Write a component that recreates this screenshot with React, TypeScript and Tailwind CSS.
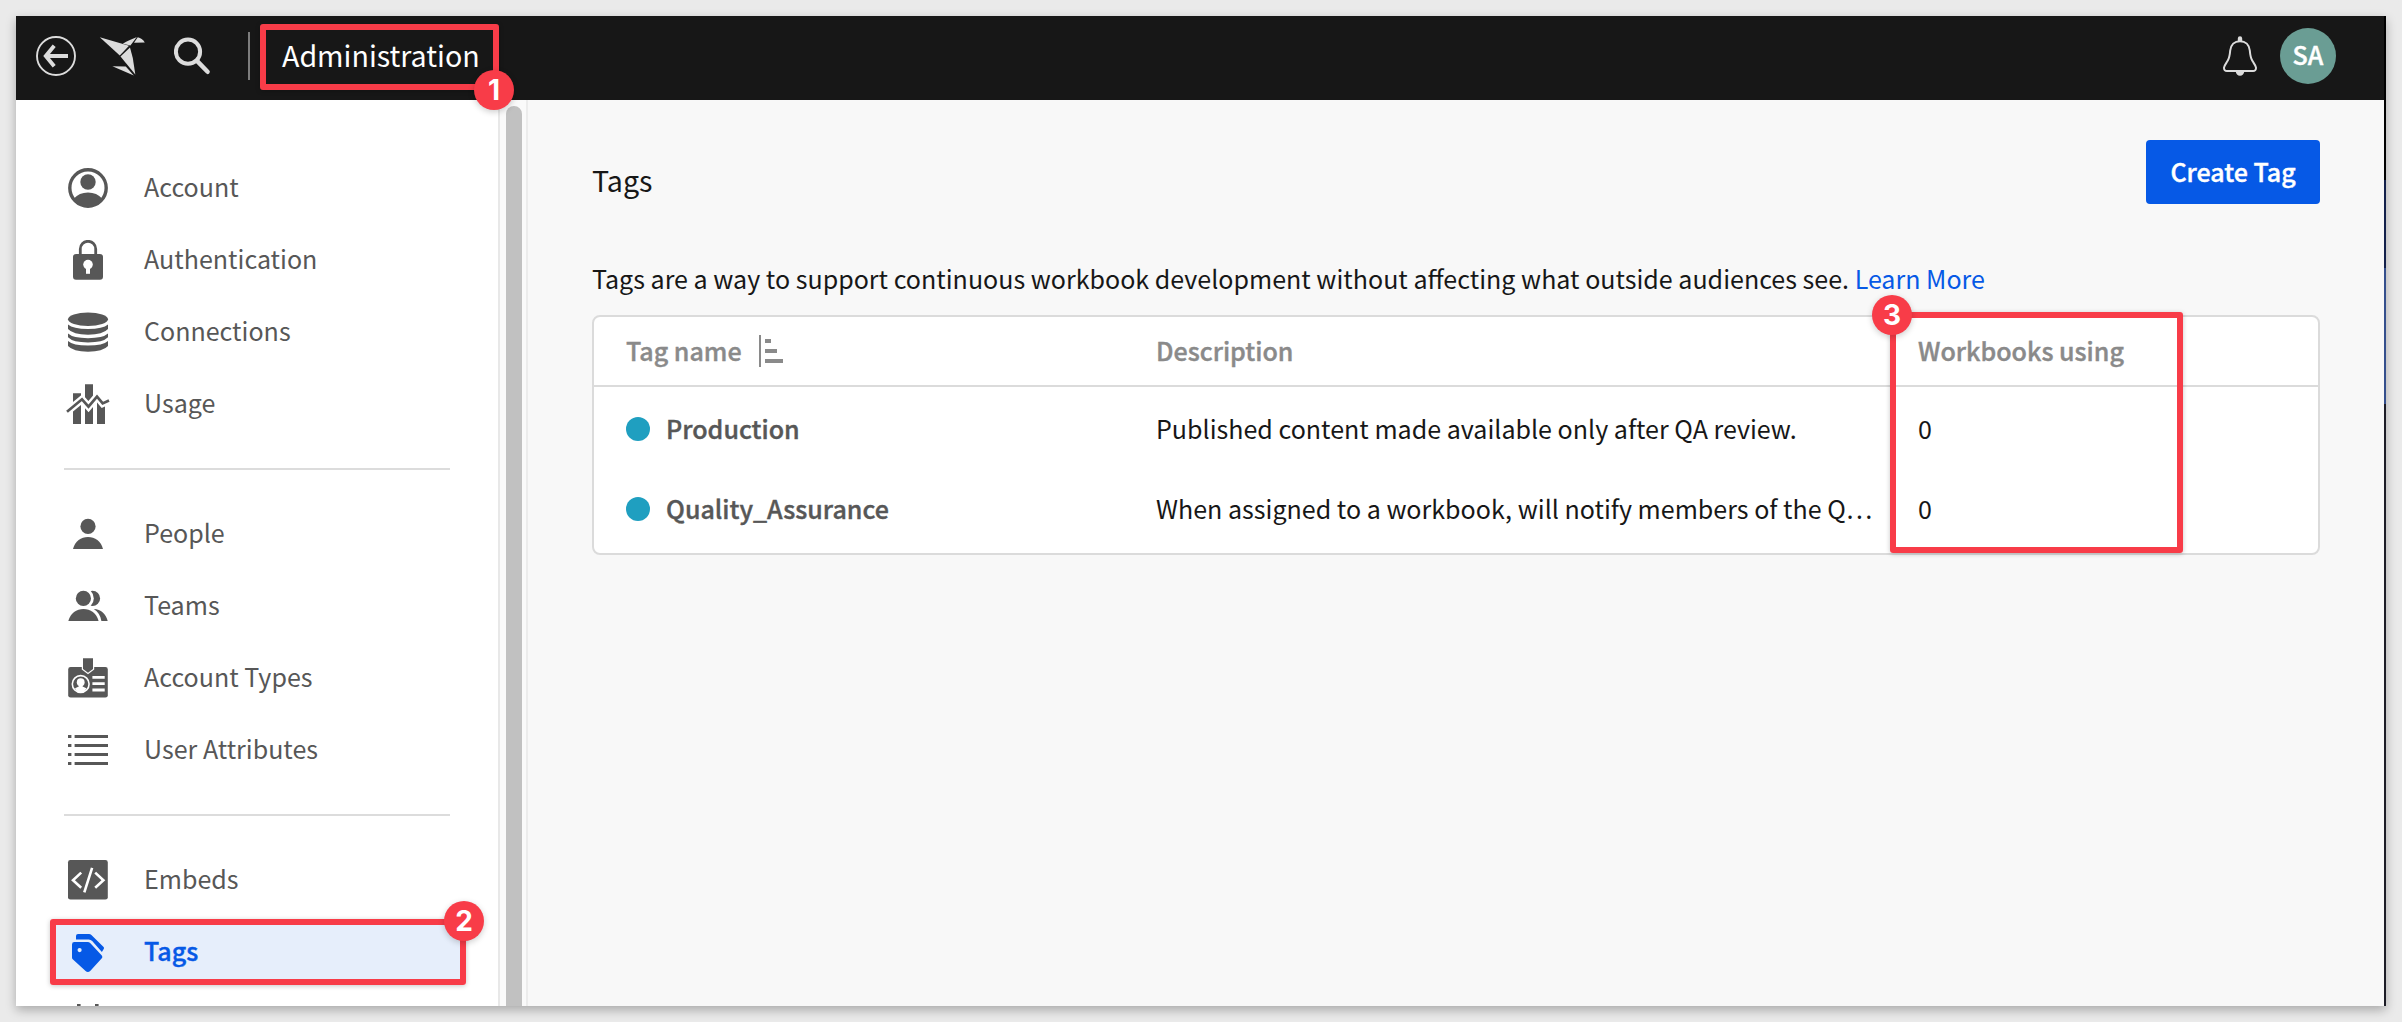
import type { ReactNode } from "react";

/* ---------- sidebar icons, drawn on a 44x40 canvas centred on the origin ---------- */

function Glyph({ children }: { children: ReactNode }) {
  return (
    <svg viewBox="-22 -20 44 40" className="h-10 w-11 shrink-0" fill="currentColor">
      {children}
    </svg>
  );
}

const AccountIcon = () => (
  <Glyph>
    <clipPath id="account-clip">
      <circle r="19" />
    </clipPath>
    <circle r="18.2" fill="none" stroke="currentColor" strokeWidth="3.4" />
    <circle cy="-6" r="7.7" />
    <path clipPath="url(#account-clip)" d="M-14 10.5Q-9 4.4 0 4.4Q9 4.4 14 10.5V20H-14Z" />
  </Glyph>
);

const LockIcon = () => (
  <Glyph>
    <path d="M-7.7 -4V-11A7.7 7.7 0 0 1 7.7 -11V-4" fill="none" stroke="currentColor" strokeWidth="2.8" />
    <rect x="-15" y="-6" width="30" height="25.8" rx="3" />
    <circle cy="4.6" r="4.8" fill="#fff" />
    <rect x="-2" y="6" width="4" height="7.8" fill="#fff" />
  </Glyph>
);

const DatabaseIcon = () => (
  <Glyph>
    <ellipse cy="-12.8" rx="20" ry="6.8" />
    <path d="M-20 -7.4Q-15 -3 0 -3Q15 -3 20 -7.4V-3Q15 2.7 0 2.7Q-15 2.7 -20 -3Z" />
    <path d="M-20 1.6Q-15 6.2 0 6.2Q15 6.2 20 1.6V5.2Q15 10.4 0 10.4Q-15 10.4 -20 5.2Z" />
    <path d="M-20 9Q-15 13.6 0 13.6Q15 13.6 20 9V14Q15 19.7 0 19.7Q-15 19.7 -20 14Z" />
  </Glyph>
);

const UsageIcon = () => (
  <Glyph>
    <path d="M-15 -10.7H-7V20H-15ZM-3 -19.7H5V20H-3ZM9 -4H17V20H9Z" />
    <path d="M-21 7.7L-6 -4.7L.5 2.6L9 -7.4L14.7 -.6L21 -3.4" fill="none" stroke="#fff" strokeWidth="7.4" />
    <path d="M-21 7.7L-6 -4.7L.5 2.6L9 -7.4L14.7 -.6L21 -3.4" fill="none" stroke="currentColor" strokeWidth="2.7" />
  </Glyph>
);

const PersonIcon = () => (
  <Glyph>
    <circle cy="-7.6" r="7.6" />
    <path d="M-15 15C-13 7 -7 3 0 3S13 7 15 15Z" />
  </Glyph>
);

const TeamsIcon = () => (
  <Glyph>
    <circle cx="4.5" cy="-7.6" r="7.6" />
    <circle cx="-4.6" cy="-7.6" r="10.4" fill="#fff" />
    <circle cx="-4.6" cy="-7.6" r="7.6" />
    <path d="M-19.7 15C-17.5 7 -11.5 3 -4.5 3S8.5 7 10.6 15Z" />
    <path d="M5.8 3C13 3 18 8 19.7 15H13.4C12.6 9.5 10 5.8 5.8 3Z" />
  </Glyph>
);

const BadgeIcon = () => (
  <Glyph>
    <rect x="-19.8" y="-11" width="39.6" height="30.6" rx="2.4" />
    <path d="M-6.2 -20H6.2V-8.4L0 -3.8L-6.2 -8.4Z" fill="#fff" />
    <path d="M-5 -19.8H5V-9L0 -5.2L-5 -9Z" />
    <circle cx="-7.3" cy="6" r="8.4" fill="none" stroke="#fff" strokeWidth="1.6" />
    <circle cx="-7.3" cy="4.2" r="3.9" fill="#fff" />
    <path d="M-9.2 6H-5.4V8.4L-1.6 10.2Q-3.4 14.4 -7.3 14.4T-13 10.2L-9.2 8.4Z" fill="#fff" />
    <path d="M4.4 -2H16.7V.8H4.4ZM4.4 4.2H16.7V7H4.4ZM4.4 10.6H16.7V13.4H4.4Z" fill="#fff" />
  </Glyph>
);

const ListIcon = () => (
  <Glyph>
    <path d="M-20 -15H-16.6V-12H-20ZM-20 -6H-16.6V-3H-20ZM-20 3H-16.6V6H-20ZM-20 12H-16.6V15H-20Z" />
    <path d="M-13.4 -15H20V-12H-13.4ZM-13.4 -6H20V-3H-13.4ZM-13.4 3H20V6H-13.4ZM-13.4 12H20V15H-13.4Z" />
  </Glyph>
);

const EmbedIcon = () => (
  <Glyph>
    <rect x="-20" y="-20" width="39.8" height="39.6" rx="2.4" />
    <path
      d="M-6.8 -7.4L-15 .2L-6.8 7.8M7.2 -7.4L15.4 .2L7.2 7.8M4.1 -12.2L-3.7 12.4"
      fill="none"
      stroke="#fff"
      strokeWidth="2.6"
    />
  </Glyph>
);

const TagIcon = () => (
  <Glyph>
    <path d="M-12 -12.6V-16Q-12 -18 -10 -18H1Q2.4 -18 3.4 -17L15.6 -5Q16.4 -4 15.7 -3L13.9 0L4.2 -11Q2.8 -12.6 .8 -12.6Z" />
    <path
      fillRule="evenodd"
      d="M-13.6 -10H-.5Q1.2 -10 2.4 -8.8L13.8 3.6Q14.8 4.9 13.8 6.2L2.2 18.9Q-.2 21 -2.4 18.9L-15 7.6Q-16 6.6 -16 5.4V-7.6Q-16 -10 -13.6 -10ZM-8.4 -4A2.1 2.1 0 1 0 -8.4 .2A2.1 2.1 0 1 0 -8.4 -4Z"
    />
  </Glyph>
);

const NextIcon = () => (
  <Glyph>
    <path d="M-11 -20H-7.4V-8H-11ZM7 -20H10.6V-8H7Z" />
  </Glyph>
);

/* ---------- annotations ---------- */

function Marker({ n, className }: { n: number; className: string }) {
  return (
    <span
      className={`absolute z-20 flex size-10 items-center justify-center rounded-full bg-[#f83c48] font-[Inter] text-[28px] leading-none font-bold text-white shadow-[0_2px_6px_rgba(0,0,0,0.2)] ${className}`}
    >
      {n}
    </span>
  );
}

function Frame({ className }: { className: string }) {
  return (
    <span
      className={`pointer-events-none absolute z-10 rounded-[3px] border-[6px] border-[#f83c48] shadow-[0_1px_5px_rgba(0,0,0,0.22)] ${className}`}
    />
  );
}

/* ---------- header ---------- */

function Header() {
  return (
    <header className="flex h-[84px] shrink-0 items-center bg-[#171717] pb-1 text-[#dcdcdc]">
      <svg viewBox="36 36 40 40" className="ml-5 size-10" fill="none" stroke="currentColor">
        <circle cx="56" cy="56" r="19" strokeWidth="1.9" />
        <path d="M68 56H46M54.2 45.8L45.8 56L54.2 66.2" strokeWidth="3.9" />
      </svg>
      <svg viewBox="98 35 48 42" className="ml-[22px] h-[42px] w-12" fill="currentColor">
        <path d="M99.8 37.2L129 45.7L119.8 55.4Z" />
        <path d="M130 47.6L120.5 56.6L135.3 74.4L132.8 58Z" />
        <path d="M112.4 66.2L125.8 66.6L133.8 75.4Z" />
        <path d="M122.8 43.8C127.5 40.5 131 39.6 136.8 37L130.4 45.6Z" />
        <path d="M137.8 37.2C140.5 37.8 143.2 39.6 144.8 42.6L134 42.8Z" />
      </svg>
      <svg viewBox="174 37 38 38" className="ml-7 size-[38px]" fill="none" stroke="currentColor">
        <circle cx="188" cy="51.7" r="12.1" strokeWidth="4" />
        <path d="M197.5 61.4L207.6 71.8" strokeWidth="4.4" strokeLinecap="round" />
      </svg>
      <div className="ml-9 h-12 w-0.5 bg-[#7d7d7d]" />
      <div className="relative ml-8 pb-0.5 text-[28.6px] leading-[42px] text-white">
        Administration
        <Frame className="-top-[10px] -left-[22px] h-[66px] w-[239px]" />
        <Marker n={1} className="top-[36px] left-[192px]" />
      </div>
      <svg viewBox="2222 35 36 42" className="ml-auto h-[42px] w-9" fill="none" stroke="currentColor">
        <path
          d="M2240 41.2C2234.4 41.2 2230.8 45 2230.2 50.5C2229.9 54 2229.6 57.4 2227.8 60.6C2226.2 63.4 2224.2 65.6 2224 67.6C2223.8 69.8 2225 71 2227 71H2253C2255 71 2256.2 69.8 2256 67.6C2255.8 65.6 2253.8 63.4 2252.2 60.6C2250.4 57.4 2250.1 54 2249.8 50.5C2249.2 45 2245.6 41.2 2240 41.2Z"
          strokeWidth="2"
        />
        <path
          d="M2237.8 41V38.4A2.2 2.2 0 0 1 2242.2 38.4V41ZM2235.8 71.6H2244.2A4.2 4.2 0 0 1 2235.8 71.6Z"
          fill="currentColor"
          stroke="none"
        />
      </svg>
      <div className="mr-12 ml-[22px] flex size-14 items-center justify-center rounded-full bg-[#6a9d94] pb-1 text-[25px] leading-9 font-medium text-white [-webkit-text-stroke:0.4px]">
        SA
      </div>
    </header>
  );
}

/* ---------- sidebar ---------- */

type Item = { label: string; icon: ReactNode; active?: boolean };

const groups: Item[][] = [
  [
    { label: "Account", icon: <AccountIcon /> },
    { label: "Authentication", icon: <LockIcon /> },
    { label: "Connections", icon: <DatabaseIcon /> },
    { label: "Usage", icon: <UsageIcon /> },
  ],
  [
    { label: "People", icon: <PersonIcon /> },
    { label: "Teams", icon: <TeamsIcon /> },
    { label: "Account Types", icon: <BadgeIcon /> },
    { label: "User Attributes", icon: <ListIcon /> },
  ],
  [
    { label: "Embeds", icon: <EmbedIcon /> },
    { label: "Tags", icon: <TagIcon />, active: true },
    { label: "", icon: <NextIcon /> },
  ],
];

function SidebarItem({ label, icon, active }: Item) {
  return (
    <li className={active ? "relative flex h-[72px] items-center text-[#0659e6]" : "flex h-[72px] items-center text-[#575757]"}>
      <div className={active ? "ml-10 flex h-16 w-[408px] items-center bg-[#e6eefb] pl-[10px]" : "flex items-center pl-[50px]"}>
        {icon}
        <span
          className={
            active
              ? "ml-[34px] pb-1 text-[25px] leading-9 font-medium [-webkit-text-stroke:0.4px]"
              : "ml-[34px] pb-1 text-[25.05px] leading-9"
          }
        >
          {label}
        </span>
      </div>
      {active && (
        <>
          <Frame className="top-[3px] left-[34px] h-[66px] w-[416px]" />
          <Marker n={2} className="-top-[15px] left-[428px]" />
        </>
      )}
    </li>
  );
}

function Sidebar() {
  return (
    <nav className="flex w-[484px] shrink-0 flex-col border-r-2 border-[#e8e8e8] bg-white pt-[52px]">
      {groups.map((items, i) => (
        <div key={i}>
          {i > 0 && <div className="mt-7 mb-7 ml-12 h-0.5 w-[386px] bg-[#dcdcdc]" />}
          <ul>
            {items.map((item, j) => (
              <SidebarItem key={j} {...item} />
            ))}
          </ul>
        </div>
      ))}
    </nav>
  );
}

/* ---------- content ---------- */

const rows = [
  { name: "Production", description: "Published content made available only after QA review.", count: 0 },
  { name: "Quality_Assurance", description: "When assigned to a workbook, will notify members of the Q…", count: 0 },
];

function TagsTable() {
  return (
    <div className="relative mt-[17px] h-[240px] w-[1728px] rounded-lg border-2 border-[#dbdbdb] bg-white">
      <div className="mb-0.5 grid h-[70px] grid-cols-[530px_762px_1fr] items-center border-b-2 border-[#dbdbdb] pl-8 text-[25.05px] leading-9 font-medium text-[#8a8a8a] [-webkit-text-stroke:0.4px]">
        <div className="flex items-center">
          <span className="pb-0.5">Tag name</span>
          <svg viewBox="0 0 24 32" className="ml-[17px] h-8 w-6" fill="currentColor">
            <path d="M0 0H2V32H0ZM6 4H12V8H6ZM6 14H18V18H6ZM6 24H24V28H6Z" />
          </svg>
        </div>
        <div className="pb-0.5">Description</div>
        <div className="pb-0.5">Workbooks using</div>
      </div>
      {rows.map((r) => (
        <div key={r.name} className="grid h-20 grid-cols-[530px_762px_1fr] items-center pl-8 text-[25.05px] leading-9 text-[#171717]">
          <div className="flex items-center font-medium text-[#575757] [-webkit-text-stroke:0.4px]">
            <span className="size-6 rounded-full bg-[#1f9fc0]" />
            <span className="ml-4 pb-0.5">{r.name}</span>
          </div>
          <div className="pb-0.5 whitespace-nowrap">{r.description}</div>
          <div className="pb-0.5">{r.count}</div>
        </div>
      ))}
      <Frame className="-top-[5px] left-[1296px] h-[241px] w-[293px]" />
      <Marker n={3} className="-top-[22px] left-[1278px]" />
    </div>
  );
}

function Content() {
  return (
    <main className="flex-1 bg-[#f8f8f8] pt-10 pl-16">
      <div className="flex h-16 w-[1728px] items-start justify-between">
        <h1 className="mt-[19px] text-[28.6px] leading-[42px] text-[#171717]">Tags</h1>
        <button className="h-16 w-[174px] rounded bg-[#0659e6] pb-0.5 text-[25px] leading-9 font-medium text-white [-webkit-text-stroke:0.4px]">
          Create Tag
        </button>
      </div>
      <p className="mt-[54px] text-[25.06px] leading-[40px] text-[#171717]">
        Tags are a way to support continuous workbook development without affecting what outside audiences see.{" "}
        <a className="text-[#0659e6]">Learn More</a>
      </p>
      <TagsTable />
    </main>
  );
}

export default function App() {
  return (
    <div className="flex h-[1022px] w-[2402px] bg-[#eaeaea] p-4 font-['Noto_Sans_CJK_SC',sans-serif]">
      <div className="flex h-[990px] w-[2370px] shadow-[0_4px_10px_rgba(0,0,0,0.28)]">
        <div className="flex w-[2368px] flex-col overflow-hidden">
          <Header />
          <div className="flex min-h-0 flex-1">
            <Sidebar />
            <div className="w-7 shrink-0 border-r-2 border-[#ececec] bg-[#fafafa] pt-1.5 pl-1.5">
              <div className="h-[920px] w-4 rounded-full bg-[#c1c1c1]" />
            </div>
            <Content />
          </div>
        </div>
        <div className="flex w-0.5 flex-col bg-[#1c1c26]">
          <div className="h-[164px] bg-black" />
          <div className="h-[88px] bg-[#12204a]" />
          <div className="h-[136px] bg-[#344f8c]" />
        </div>
      </div>
    </div>
  );
}
